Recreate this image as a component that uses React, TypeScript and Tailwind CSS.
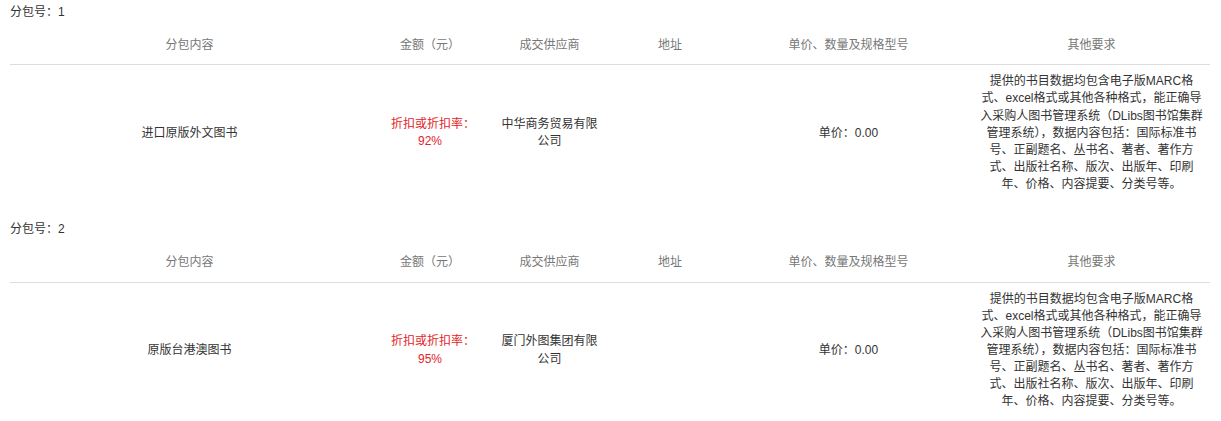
import React from "react";

const headers = ["分包内容", "金额（元）", "成交供应商", "地址", "单价、数量及规格型号", "其他要求"];
const widths = ["w-[359px]", "w-[114px]", "w-[133px]", "w-[108px]", "w-[249px]", "w-[237px]"];
const thPad = ["px-[8px]", "pl-[16px] pr-[8px]", "px-[8px]", "px-[8px]", "px-[8px]", "px-[8px]"];

const otherLines = [
  "提供的书目数据均包含电子版MARC格",
  "式、excel格式或其他各种格式，能正确导",
  "入采购人图书管理系统（DLibs图书馆集群",
  "管理系统），数据内容包括：国际标准书",
  "号、正副题名、丛书名、著者、著作方",
  "式、出版社名称、版次、出版年、印刷",
  "年、价格、内容提要、分类号等。",
];

type Pkg = { no: number; content: string; rate: string; supplier: [string, string] };

const pkgs: Pkg[] = [
  { no: 1, content: "进口原版外文图书", rate: "92%", supplier: ["中华商务贸易有限", "公司"] },
  { no: 2, content: "原版台港澳图书", rate: "95%", supplier: ["厦门外图集团有限", "公司"] },
];

function Section({ p }: { p: Pkg }) {
  return (
    <div className="mb-[20px]">
      <div className="text-[#333]">分包号：{p.no}</div>
      <table className="mt-[8px] w-[1200px] table-fixed border-collapse">
        <colgroup>
          {widths.map((w, i) => (
            <col key={i} className={w} />
          ))}
        </colgroup>
        <thead>
          <tr>
            {headers.map((h, i) => (
              <th
                key={h}
                className={`pt-[8px] pb-[10px] ${thPad[i]} font-normal text-center text-[#777] border-b border-[#ddd]`}
              >
                {h}
              </th>
            ))}
          </tr>
        </thead>
        <tbody>
          <tr className="text-[#333]">
            <td className="py-[8px] px-[8px] text-center align-middle">{p.content}</td>
            <td className="py-[8px] pl-[12px] pr-[4px] text-center align-middle text-[#e4232a]">
              <div className="whitespace-nowrap pl-[6px]">折扣或折扣率：</div>
              <div>{p.rate}</div>
            </td>
            <td className="py-[8px] px-[8px] text-center align-middle">
              {p.supplier[0]}
              <br />
              {p.supplier[1]}
            </td>
            <td className="py-[8px] px-[8px] text-center align-middle"></td>
            <td className="py-[8px] px-[8px] text-center align-middle">单价：0.00</td>
            <td className="py-[8px] px-0 text-center align-middle">
              {otherLines.map((l) => (
                <div key={l} className="whitespace-nowrap">
                  {l}
                </div>
              ))}
            </td>
          </tr>
        </tbody>
      </table>
    </div>
  );
}

export default function App() {
  return (
    <div
      className="w-[1221px] min-h-[421px] bg-white pl-[10px] pt-[4px] text-[12px] leading-[1.428571]"
      style={{ fontFamily: '"Liberation Sans", "Noto Sans CJK SC", sans-serif' }}
    >
      {pkgs.map((p) => (
        <Section key={p.no} p={p} />
      ))}
    </div>
  );
}
